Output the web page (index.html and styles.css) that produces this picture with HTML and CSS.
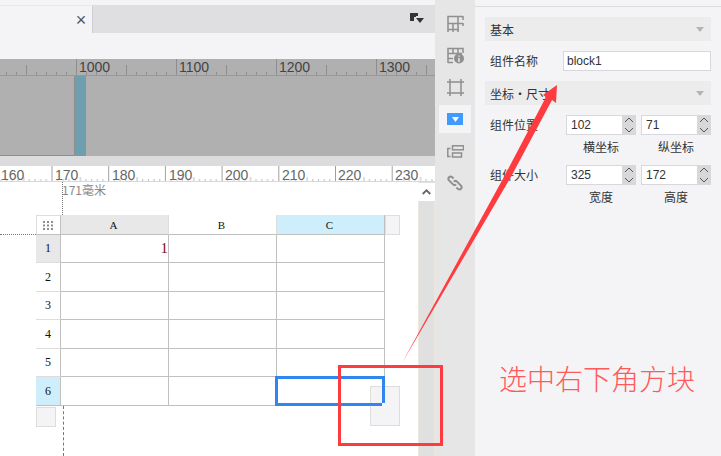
FILE: index.html
```html
<!DOCTYPE html>
<html lang="zh">
<head>
<meta charset="utf-8">
<title>block1</title>
<link rel="stylesheet" href="styles.css">
</head>
<body>
<div class="app">
  <main class="canvas">
    <div class="tabs">
      <div class="tab"><span class="tab-close">×</span></div>
      <svg class="tab-menu" width="14" height="12" viewBox="0 0 14 12"><path class="i-dark" d="M0 0h8v3h-2v1h-2v4h-4z"/><path class="i-dark" d="M6 5h8l-4 5z"/></svg>
    </div>
    <div class="toolbar"></div>
    <div class="gray-area">
      <svg class="ruler-top" width="435" height="17" viewBox="0 0 435 17">
        <defs>
          <pattern id="tickA" patternUnits="userSpaceOnUse" x="76" y="0" width="100" height="17">
            <path class="t-top" d="M.5 0V16M10.5 13V16M20.5 13V16M30.5 13V16M40.5 13V16M50.5 6V16M60.5 13V16M70.5 13V16M80.5 13V16M90.5 13V16"/>
          </pattern>
        </defs>
        <rect width="435" height="17" fill="url(#tickA)"/>
        <rect class="t-base" y="16" width="435" height="1"/>
        <text class="rt" x="-24" y="13">900</text>
        <text class="rt" x="79" y="13">1000</text>
        <text class="rt" x="179" y="13">1100</text>
        <text class="rt" x="279" y="13">1200</text>
        <text class="rt" x="379" y="13">1300</text>
      </svg>
      <div class="gray-body">
        <div class="gray-block"></div>
        <div class="teal-bar"></div>
      </div>
    </div>
    <div class="gap"></div>
    <svg class="ruler-bottom" width="435" height="16" viewBox="0 0 435 16">
      <defs>
        <pattern id="tickB" patternUnits="userSpaceOnUse" x="51.5" y="0" width="56.7" height="16">
          <path class="t-bot-major" d="M.5 0V15"/>
          <path class="t-bot-minor" d="M6.2 13V15M11.9 13V15M17.5 13V15M23.2 13V15M28.9 11V15M34.5 13V15M40.2 13V15M45.9 13V15M51.5 13V15"/>
        </pattern>
      </defs>
      <rect width="435" height="16" fill="url(#tickB)"/>
      <rect class="t-bot-base" y="15" width="435" height="1"/>
      <text class="rb" x="1" y="14">160</text>
      <text class="rb" x="55" y="14">170</text>
      <text class="rb" x="112" y="14">180</text>
      <text class="rb" x="169" y="14">190</text>
      <text class="rb" x="225" y="14">200</text>
      <text class="rb" x="282" y="14">210</text>
      <text class="rb" x="338" y="14">220</text>
      <text class="rb" x="395" y="14">230</text>
    </svg>
    <div class="stage">
      <div class="sheet-area">
        <span class="guide-label">171毫米</span>
        <i class="guide-v-top"></i>
        <i class="guide-v-bottom"></i>
        <i class="guide-h"></i>
        <div class="sheet">
          <div class="cell corner">
            <svg width="11" height="9" viewBox="0 0 11 9"><path class="i-dots" d="M0 0h2v2h-2zM4 0h2v2h-2zM8 0h2v2h-2zM0 3.500h2v2h-2zM4 3.500h2v2h-2zM8 3.500h2v2h-2zM0 7h2v2h-2zM4 7h2v2h-2zM8 7h2v2h-2z"/></svg>
          </div>
          <div class="cell head head-on">A</div>
          <div class="cell head">B</div>
          <div class="cell head head-sel">C</div>
          <div class="cell head head-add"></div>

          <div class="cell rowh rowh-on">1</div>
          <div class="cell body value">1</div>
          <div class="cell body"></div>
          <div class="cell body"></div>
          <div class="blank"></div>

          <div class="cell rowh">2</div>
          <div class="cell body"></div>
          <div class="cell body"></div>
          <div class="cell body"></div>
          <div class="blank"></div>

          <div class="cell rowh">3</div>
          <div class="cell body"></div>
          <div class="cell body"></div>
          <div class="cell body"></div>
          <div class="blank"></div>

          <div class="cell rowh">4</div>
          <div class="cell body"></div>
          <div class="cell body"></div>
          <div class="cell body"></div>
          <div class="blank"></div>

          <div class="cell rowh">5</div>
          <div class="cell body"></div>
          <div class="cell body"></div>
          <div class="cell body"></div>
          <div class="blank"></div>

          <div class="cell rowh rowh-sel">6</div>
          <div class="cell body"></div>
          <div class="cell body"></div>
          <div class="cell body selected"><b class="handle"></b></div>
          <div class="blank"></div>
        </div>
        <div class="add-row"></div>
        <div class="resize-block"></div>
      </div>
      <div class="scroll">
        <div class="scroll-up"><svg width="9" height="6" viewBox="0 0 9 6"><path class="i-chev" d="M.7 5L4.500 1.300L8.300 5"/></svg></div>
      </div>
    </div>
  </main>

  <nav class="iconbar">
    <div class="ib">
      <svg width="17" height="17" viewBox="0 0 17 17"><path class="i" d="M1 17V1.500H16M1 8.500H16M1 14.500H12M6 17V8.500M11 17V1.500M16 1V5M16 8V11"/></svg>
    </div>
    <div class="ib">
      <svg width="17" height="17" viewBox="0 0 17 17"><path class="i" d="M1 16V1.500H16V6M1 6.500H15M1 11.500H6M6 1.500V6.500M11 1.500V6.500M1 15.500H6"/><circle class="i-fill" cx="12" cy="11.500" r="5"/><path class="i-cut" d="M12 8.500V9.800M12 11V15"/></svg>
    </div>
    <div class="ib">
      <svg width="17" height="17" viewBox="0 0 17 17"><path class="i" d="M0 3H17M0 14H17M3 0V17M14 0V17"/></svg>
    </div>
    <div class="ib ib-on">
      <span class="ib-blue"><svg width="7" height="5" viewBox="0 0 7 5"><path class="i-white" d="M0 0h7l-3.500 5z"/></svg></span>
    </div>
    <div class="ib">
      <svg width="17" height="13" viewBox="0 0 17 13"><path class="i" d="M3.500 3.500H.8V11.500H3.500"/><rect class="i" x="5.500" y=".8" width="11" height="4"/><rect class="i" x="5.500" y="8" width="9" height="4"/></svg>
    </div>
    <div class="ib">
      <svg width="16" height="16" viewBox="0 0 16 16"><path class="i-link" d="M6.500 3.500L5 2A2.300 2.300 0 0 0 1.800 5.200L6 9.400A2.300 2.300 0 0 0 9.200 9.400"/><path class="i-link" d="M9.500 12.500L11 14A2.300 2.300 0 0 0 14.200 10.800L10 6.600A2.300 2.300 0 0 0 6.800 6.600"/></svg>
    </div>
  </nav>

  <aside class="panel">
    <div class="panel-top"></div>
    <div class="section"><span>基本</span><i class="caret"></i></div>
    <div class="row-name">
      <label class="lbl">组件名称</label>
      <input class="name-input" value="block1" readonly>
    </div>
    <div class="section"><span>坐标・尺寸</span><i class="caret"></i></div>
    <div class="row-fields">
      <label class="lbl">组件位置</label>
      <div class="field">
        <div class="spin"><span class="num">102</span><span class="arrows"><svg width="10" height="20" viewBox="0 0 10 20"><path class="i-spin" d="M1 7L5 3L9 7M1 13L5 17L9 13"/></svg></span></div>
        <div class="cap">横坐标</div>
      </div>
      <div class="field">
        <div class="spin"><span class="num">71</span><span class="arrows"><svg width="10" height="20" viewBox="0 0 10 20"><path class="i-spin" d="M1 7L5 3L9 7M1 13L5 17L9 13"/></svg></span></div>
        <div class="cap">纵坐标</div>
      </div>
    </div>
    <div class="row-fields">
      <label class="lbl">组件大小</label>
      <div class="field">
        <div class="spin"><span class="num">325</span><span class="arrows"><svg width="10" height="20" viewBox="0 0 10 20"><path class="i-spin" d="M1 7L5 3L9 7M1 13L5 17L9 13"/></svg></span></div>
        <div class="cap">宽度</div>
      </div>
      <div class="field">
        <div class="spin"><span class="num">172</span><span class="arrows"><svg width="10" height="20" viewBox="0 0 10 20"><path class="i-spin" d="M1 7L5 3L9 7M1 13L5 17L9 13"/></svg></span></div>
        <div class="cap">高度</div>
      </div>
    </div>
    <p class="note">选中右下角方块</p>
  </aside>

  <svg class="annotation" width="721" height="456" viewBox="0 0 721 456">
    <polygon class="arrow" points="402,363 505,175 546,97 543,95 557,85 556,103 552,100 512,175"/>
    <rect class="mark" x="339.500" y="366.500" width="102" height="78"/>
  </svg>
</div>
</body>
</html>
```

FILE: styles.css
```css
* { box-sizing: border-box; }
html, body { margin: 0; padding: 0; }
body { width: 721px; height: 456px; overflow: hidden; background: #f4f4f6; font-family: "Noto Sans CJK SC", "Liberation Sans", sans-serif; }

.app { position: relative; display: flex; width: 721px; height: 456px; }

/* canvas column */
.canvas { width: 435px; flex: none; display: flex; flex-direction: column; height: 456px; }
.tabs { margin-top: 5px; height: 28px; flex: none; background: #dfdfe1; display: flex; justify-content: space-between; align-items: center; padding-right: 11px; }
.tab { width: 93px; height: 28px; background: #f4f4f6; border-right: 1px solid #cfcfd1; border-top: 1px solid #e8e8ea; display: flex; justify-content: flex-end; align-items: center; padding-right: 3px; }
.tab-close { font: 18px/1 "Liberation Sans", sans-serif; color: #555; width: 16px; text-align: center; }
.i-dark { fill: #333; }
.toolbar { height: 26px; flex: none; background: #f4f4f6; }

.gray-area { height: 97px; flex: none; background: #b0b0b0; display: flex; flex-direction: column; }
.ruler-top { display: block; flex: none; }
.t-top { stroke: #8e8e8e; stroke-width: 1; fill: none; }
.t-base { fill: #989898; }
.rt { font: 14px "Liberation Sans", sans-serif; fill: #444; }
.gray-body { flex: 1; display: flex; }
.gray-block { width: 75px; border-right: 1px solid #8e8e8e; border-bottom: 1px solid #8e8e8e; }
.teal-bar { width: 11px; background: #6d9fae; }

.gap { height: 10px; flex: none; background: #dcdcde; }
.ruler-bottom { display: block; flex: none; background: #fff; }
.t-bot-major { stroke: #a0a0a0; fill: none; }
.t-bot-minor { stroke: #bbb; fill: none; }
.t-bot-base { fill: #d8d8dd; }
.rb { font: 14px "Liberation Sans", sans-serif; fill: #666; }

.stage { flex: 1; display: flex; background: #fff; }
.sheet-area { position: relative; width: 418px; flex: none; padding: 33px 0 0 36px; }
.guide-label { position: absolute; left: 62px; top: 1px; font-size: 12px; line-height: 14px; color: #888; }
.guide-v-top { position: absolute; left: 62px; top: 0; height: 33px; border-left: 1px dotted #777; }
.guide-v-bottom { position: absolute; left: 63px; top: 224px; height: 50px; border-left: 1px dashed #777; }
.guide-h { position: absolute; left: 0; top: 52px; width: 36px; border-top: 1px dotted #777; }

.sheet { display: grid; grid-template-columns: 25px 108px 108px 108px 15px; grid-template-rows: 20px 28px 29px 28px 29px 28px 29px; width: 364px; }
.cell { display: flex; align-items: center; justify-content: center; font: 12px "Liberation Serif", serif; color: #111; }
.corner { border: 1px solid #ddd; border-bottom-color: #c0c0c0; border-right-color: #c0c0c0; }
.i-dots { fill: #8e8e8e; }
.head { border-right: 1px solid #ddd; border-bottom: 1px solid #c0c0c0; font-size: 11px; padding-right: 2px; }
.head-on { background: #e8e8e8; }
.head-sel { background: #cdeefa; border-right-color: #c0c0c0; }
.head-add { background: #f4f4f6; border: 1px solid #ddd; }
.rowh { border-right: 1px solid #c0c0c0; border-bottom: 1px solid #ddd; }
.rowh-on { background: #e8e8e8; }
.rowh-sel { background: #cdeefa; border-bottom-color: #c0c0c0; }
.body { border-right: 1px solid #c0c0c0; border-bottom: 1px solid #c0c0c0; }
.value { justify-content: flex-end; font: 15px "Liberation Serif", serif; color: #7a1020; }
.selected { position: relative; z-index: 2; border: 0; }
.selected::before { content: ""; position: absolute; left: -2px; right: 0; top: -1px; bottom: 0; border: 3px solid #2f86f0; }
.handle { position: absolute; right: 0; bottom: 0; width: 3px; height: 3px; background: #fff; z-index: 1; }
.add-row { width: 20px; height: 20px; margin-top: 1px; background: #f4f4f6; border: 1px solid #ddd; }
.resize-block { position: absolute; left: 370px; top: 204px; width: 30px; height: 40px; background: #f4f4f6; border: 1px solid #ddd; }

.scroll { flex: 1; background: #e0e0e0; border-left: 1px solid #ece8dc; border-right: 1px solid #ece8dc; }
.scroll-up { height: 18px; margin: 1px -1px 0; background: #fff; display: flex; align-items: center; justify-content: center; }
.i-chev { fill: none; stroke: #666; stroke-width: 1.800; }

/* icon bar */
.iconbar { width: 40px; flex: none; background: #e6e6e6; display: flex; flex-direction: column; align-items: center; padding-top: 7px; }
.ib { width: 32px; height: 32px; flex: none; display: flex; align-items: center; justify-content: center; }
.ib-on { height: 28px; margin: 2px 0; background: #f4f4f6; }
.ib-blue { width: 16px; height: 12px; background: #3f9bff; display: flex; align-items: center; justify-content: center; }
.i { fill: none; stroke: #8f8f8f; stroke-width: 1.500; }
.i-fill { fill: #8f8f8f; }
.i-cut { stroke: #e6e6e6; stroke-width: 1.500; fill: none; }
.i-white { fill: #fff; }
.i-link { fill: none; stroke: #8f8f8f; stroke-width: 2; }

/* property panel */
.panel { width: 246px; flex: none; background: #f4f4f6; padding: 0 10px; display: flex; flex-direction: column; position: relative; }
.panel-top { height: 7px; flex: none; margin: 0 -10px 10px; border-bottom: 1px solid #dcdcdf; }
.section { height: 24px; flex: none; background: #ececec; display: flex; align-items: center; justify-content: space-between; padding: 0 5px; font-size: 12px; color: #333; }
.caret { width: 0; height: 0; border: 4px solid transparent; border-top: 5px solid #b4b4b4; border-bottom: 0; margin-right: 2px; }
.row-name { display: flex; align-items: center; justify-content: space-between; margin: 10px 0; height: 20px; flex: none; }
.lbl { font-size: 12px; color: #333; padding-left: 5px; line-height: 20px; white-space: nowrap; }
.name-input { width: 148px; height: 20px; border: 1px solid #d8d8dc; background: #fff; padding: 0 3px; font: 12px "Liberation Sans", sans-serif; color: #333; outline: 0; }
.row-fields { display: grid; grid-template-columns: 76px 70px 70px; column-gap: 5px; margin-top: 10px; height: 40px; flex: none; }
.spin { display: flex; height: 20px; border: 1px solid #d8d8dc; background: #fff; }
.num { flex: 1; padding-left: 4px; font: 12px/18px "Liberation Sans", sans-serif; color: #333; }
.arrows { width: 14px; margin: -1px -1px -1px 0; background: #d8d8d8; display: flex; align-items: center; justify-content: center; }
.i-spin { fill: none; stroke: #555; stroke-width: 1; }
.cap { font-size: 12px; line-height: 16px; margin-top: 4px; text-align: center; color: #333; }
.note { position: absolute; left: 24px; top: 360px; margin: 0; font-size: 28px; font-weight: 300; line-height: 36px; color: #ff5a5a; white-space: nowrap; }

/* annotation layer */
.annotation { position: absolute; left: 0; top: 0; pointer-events: none; z-index: 5; }
.arrow { fill: #ff3b3f; }
.mark { fill: none; stroke: #ff3b3f; stroke-width: 3; }
```
